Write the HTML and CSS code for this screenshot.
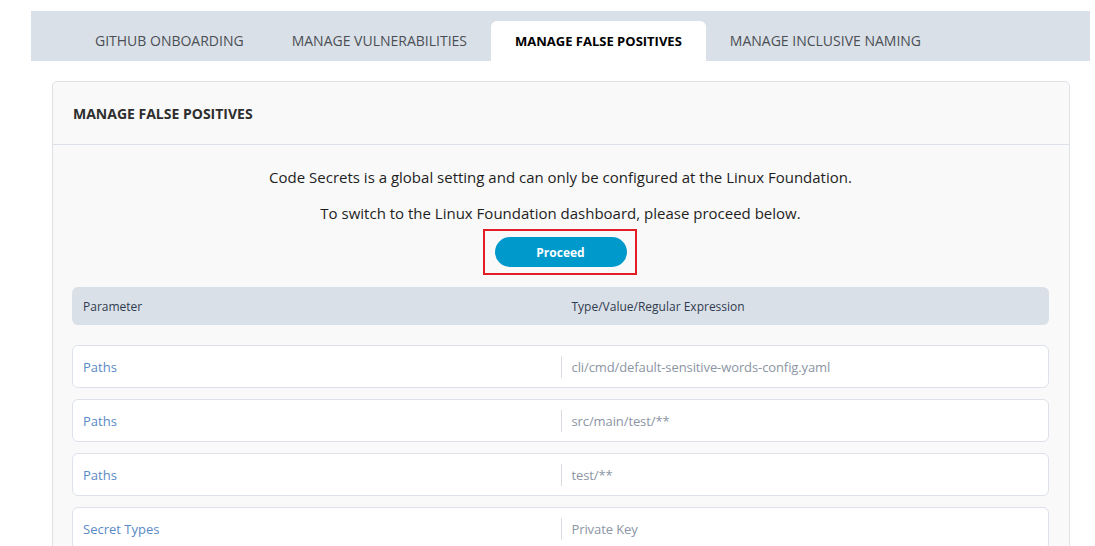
FILE: index.html
```html
<!DOCTYPE html>
<html>
<head>
<meta charset="utf-8">
<link rel="stylesheet" href="styles.css">
</head>
<body>
<div class="page">
  <nav class="tabbar">
    <div class="tab">GITHUB ONBOARDING</div>
    <div class="tab">MANAGE VULNERABILITIES</div>
    <div class="tab active">MANAGE FALSE POSITIVES</div>
    <div class="tab">MANAGE INCLUSIVE NAMING</div>
  </nav>
  <div class="content">
    <section class="card">
      <header class="card-header">MANAGE FALSE POSITIVES</header>
      <div class="card-body">
        <p class="msg">Code Secrets is a global setting and can only be configured at the Linux Foundation.</p>
        <p class="msg second">To switch to the Linux Foundation dashboard, please proceed below.</p>
        <div class="btn-wrap">
          <div class="highlight">
            <button class="btn">Proceed</button>
          </div>
        </div>
        <div class="thead">
          <div class="cell">Parameter</div>
          <div class="cell">Type/Value/Regular Expression</div>
        </div>
        <div class="rows">
          <div class="row">
            <div class="cell label">Paths</div>
            <div class="cell value"><span class="sep"></span>cli/cmd/default-sensitive-words-config.yaml</div>
          </div>
          <div class="row">
            <div class="cell label">Paths</div>
            <div class="cell value"><span class="sep"></span>src/main/test/**</div>
          </div>
          <div class="row">
            <div class="cell label">Paths</div>
            <div class="cell value"><span class="sep"></span>test/**</div>
          </div>
          <div class="row">
            <div class="cell label">Secret Types</div>
            <div class="cell value"><span class="sep"></span>Private Key</div>
          </div>
        </div>
      </div>
    </section>
  </div>
</div>
</body>
</html>
```

FILE: styles.css
```css
* { box-sizing: border-box; }
html, body { margin: 0; padding: 0; background: #fff; overflow: hidden; }
body {
  font-family: "Open Sans", "Noto Sans", sans-serif;
  color: #222;
}
.page {
  padding: 11px 0 0 31px;
  width: 1090px;
}
.tabbar {
  height: 50px;
  background: #dae0e7;
  display: flex;
  align-items: flex-end;
  padding-left: 40px;
}
.tab {
  height: 40px;
  line-height: 40px;
  padding: 0 24px;
  font-size: 14px;
  color: #4a4f55;
  white-space: nowrap;
}
.tab.active {
  background: #fff;
  border-radius: 6px 6px 0 0;
  font-weight: 700;
  color: #000;
  font-size: 13px;
  padding: 0 24px;
}
.content {
  padding: 20px 20px 0 21px;
}
.card {
  background: #f9f9f9;
  border: 1px solid #dfe3e8;
  border-radius: 5px;
  min-height: 500px;
}
.card-header {
  height: 63px;
  border-bottom: 1px solid #dde2ea;
  display: flex;
  align-items: center;
  padding-left: 20px;
  font-size: 14px;
  font-weight: 700;
  color: #2e2e2e;
}
.card-body {
  padding: 22px 20px 0 19px;
}
.msg {
  margin: 0;
  text-align: center;
  font-size: 15px;
  line-height: 20px;
  color: #1e1e1e;
}
.msg.second { margin-top: 16px; }
.btn-wrap {
  display: flex;
  justify-content: center;
  margin-top: 6px;
}
.highlight {
  border: 2px solid #e31e26;
  padding: 6px 8px 6px 10px;
  margin-right: 2px;
}
.btn {
  display: block;
  width: 132px;
  height: 30px;
  border: none;
  border-radius: 15px;
  background: #0099cc;
  color: #fff;
  font-family: "Open Sans", "Noto Sans", sans-serif;
  font-size: 12px;
  font-weight: 700;
}
.thead {
  margin-top: 12px;
  height: 38px;
  background: #dae0e8;
  border-radius: 6px;
  display: flex;
  align-items: center;
  font-size: 12px;
  color: #2f3b4e;
}
.thead .cell { flex: 1 1 50%; padding-left: 11px; }
.rows {
  margin-top: 20px;
  display: flex;
  flex-direction: column;
  gap: 11px;
}
.row {
  height: 43px;
  background: #fff;
  border: 1px solid #dde2ea;
  border-radius: 6px;
  display: flex;
  align-items: center;
  font-size: 13px;
}
.row .cell { flex: 1 1 50%; }
.label {
  padding-left: 10px;
  color: #5a8ac6;
}
.value {
  display: flex;
  align-items: center;
  color: #8c95a4;
  letter-spacing: -0.1px;
}
.sep {
  display: block;
  width: 1px;
  height: 22px;
  background: #d8dce2;
  margin-right: 10px;
}
```
